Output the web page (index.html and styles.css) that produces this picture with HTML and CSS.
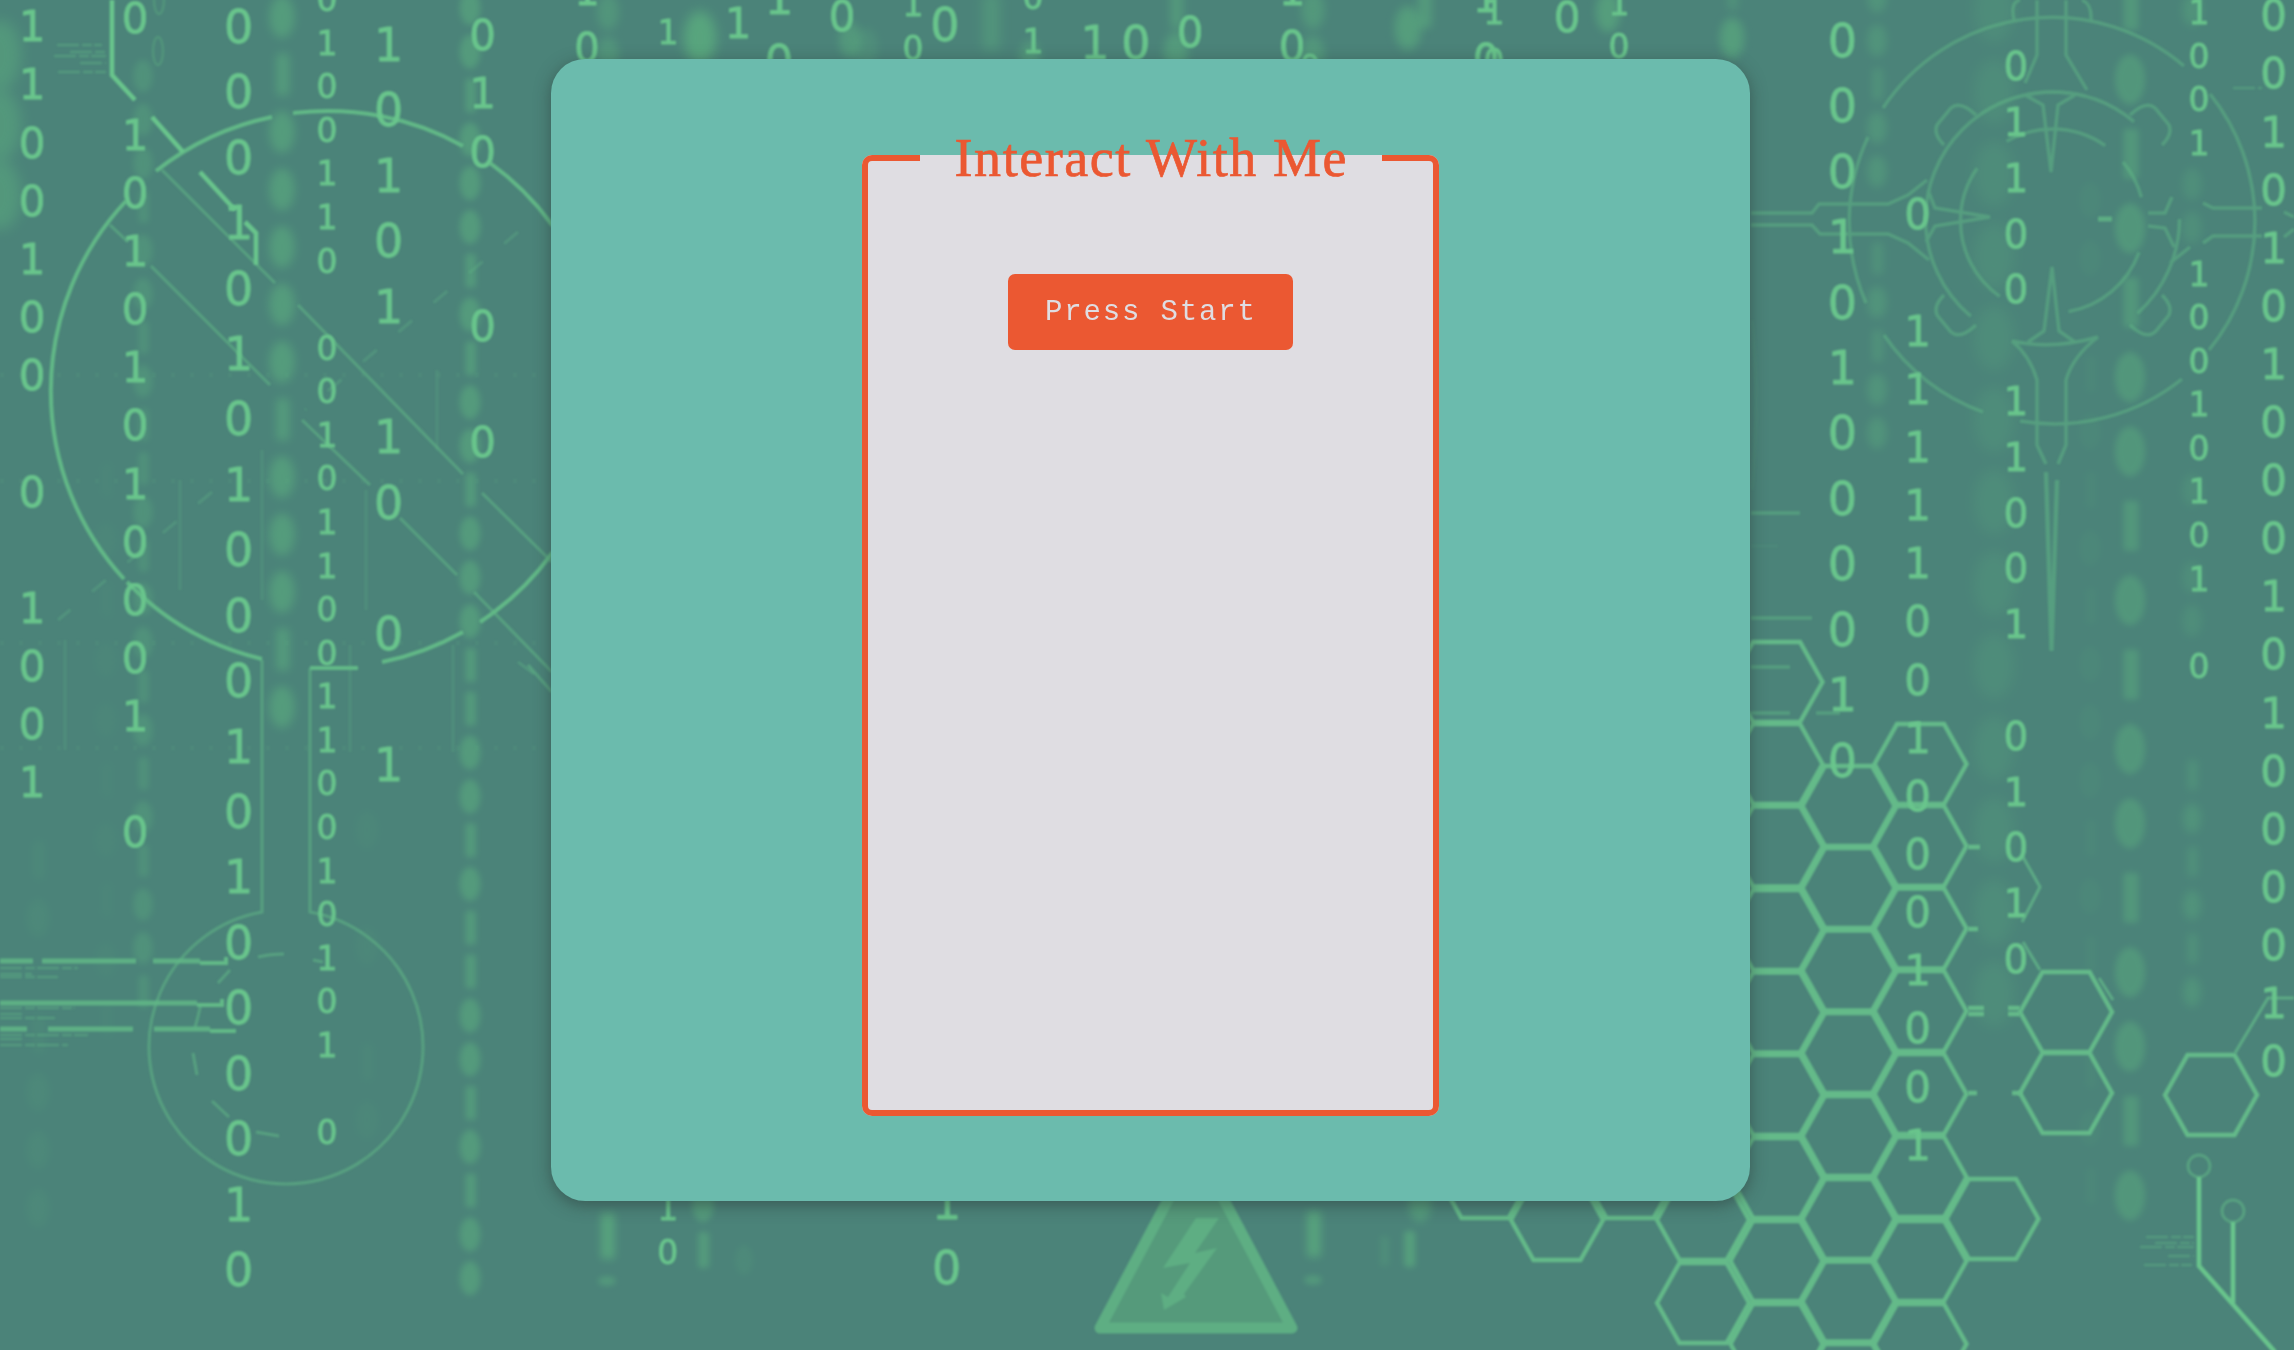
FILE: index.html
```html
<!DOCTYPE html>
<html lang="en">
<head>
<meta charset="utf-8">
<title>Interact With Me</title>
<link rel="stylesheet" href="styles.css">
</head>
<body>
<svg class="backdrop" viewBox="0 0 2294 1350" preserveAspectRatio="xMidYMid slice" aria-hidden="true">
  <g id="haze" class="haze"></g>

  <!-- magnifier outline -->
  <g class="line">
    <path class="mid" d="M262 659A278 278 0 0 1 127 582M124 579A278 278 0 0 1 126 201M156 171A278 278 0 0 1 272 117M293 113.200A278 278 0 0 1 463 146M490 163A278 278 0 0 1 553 226M553 552A278 278 0 0 1 480 622M463 632A278 278 0 0 1 382 662M358 668H310"/>
    <path class="dim" d="M262 660V912A137 137 0 1 0 310 912V668"/>
    <path class="dim" d="M162 170L275 283M298 305L463 474M482 493L552 562M110 225L128 242M151 266L270 385M302 420L370 485M400 518L457 575M474 592L552 672M528 665L552 692"/>
    <path class="dim dashed" d="M518 232L305 410M212 492L58 620"/>
    <path class="faint dots" d="M0 375H551M0 481H551M0 643H551M0 748H551"/>
    <path class="faint" d="M180 480V590M437 370V450M366 490V610M453 645V752M350 645V752M65 640V750M262 450V600"/>
    <path class="dim" d="M258 957Q270 954 284 954M313 960L323 962M218 983L230 970M201 1003Q198 1018 195 1027M193 1053L197 1075M212 1101L229 1117M256 1132L279 1136"/>
    <path class="bright" d="M112 0V75L135 100M152 117L183 152M200 172L235 210M245 222L256 233V265"/>
    <path class="dim smudge" d="M57 45H102M70 52H106M54 56H106M80 63H106M58 72H106M0 968H78M0 974H32M0 977H58M0 1008H75M0 1014H25M0 1018H55M0 1035H88M0 1039H25M0 1045H68M2146 1237H2194M2155 1243H2194M2140 1247H2194M2168 1256H2194M2144 1265H2192M2233 88H2262M518 662L534 674"/>
    <path class="rail" d="M0 961H33M42 961H136M153 961H200M0 1003H197M0 1029H27M48 1029H133M154 1029H210"/>
    <path class="mid" d="M200 963H226V957M197 1005H222V999M210 1031H236"/>
  </g>

  <!-- target reticle -->
  <g class="line dim">
    <path d="M1883 108A203 203 0 0 1 2184 66M2210 94A203 203 0 0 1 2209 350M2182 379A203 203 0 0 1 2020 421M1983 412A203 203 0 0 1 1884 335M1866 303A203 203 0 0 1 1868 137"/>
    <circle cx="2052.500" cy="219" r="127" pathLength="360" stroke-dasharray="48 82 180 50" stroke-dashoffset="0"/>
    <path d="M1982 113Q2016 92 2052 92Q2070 92 2085 96M2012 341Q2052 350 2098 337"/>
    <circle cx="2052.500" cy="221" r="92" pathLength="360" stroke-dasharray="0 20 60 45 90 25 65 15 25 15"/>
    <path d="M1751 213H1812L1819 204H1888L1908 195L1927 180M1751 225H1812L1820 234H1888L1908 243L1929 260M1928 190L1935 208L1990 217L1935 226L1926 242"/>
    <path d="M2037 0V55L2025 83M2066 0V55L2087 90M2025 95L2043 105L2051 172L2058 105L2075 95M2028 342L2044 331L2052 267L2059 331L2075 342M2012 341Q2030 356 2037 380V445L2046 464M2098 337Q2073 356 2066 380V445L2058 464"/>
    <path class="spear" d="M2046 472L2051.500 651L2057 480"/>
    <path d="M2203 203L2213 208H2262M2170 263L2190 247M2203 243L2213 236H2262M2284 212L2294 217M2284 237L2294 229M2148 213H2165L2172 197M2148 226L2165 228L2174 247"/>
    <path id="lug" d="M1976 115Q1960 100 1951 108L1937 125Q1933 134 1944 145"/>
    <use href="#lug" transform="translate(4106 0) scale(-1 1)"/>
    <use href="#lug" transform="translate(0 440) scale(1 -1)"/>
    <use href="#lug" transform="translate(4106 440) scale(-1 -1)"/>
    <path d="M2014 20Q2010 2 2020 0M2091 20Q2092 4 2082 0M1751 513H1800M1751 618H1812M1751 667H1790M1751 713H1790M1816 713H1840"/>
    <path class="faint" d="M1751 546H1778M1752 320Q1760 400 1752 490"/>
  </g>
  <path class="line glint" d="M2098 219H2112"/>

  <g id="cells" class="line cell"></g>
  <g class="line cell">
    <path class="thin" d="M2023 857L2040 887L2022 922M2023 942L2040 970"/>
    <path d="M1968 847H1980M1968 929H1978M1968 1008H1984M1968 1014H1984M2008 1008H2020M2008 1014H2020M1968 1093H1977M2012 1093H2022"/>
    <path class="thin" d="M2235 1053L2268 998H2294M2099 978L2113 1000"/>
  </g>
  <g class="line">
    <circle class="dim" cx="2199" cy="1166" r="11"/>
    <circle class="dim" cx="2233" cy="1211" r="11"/>
    <path class="bright" d="M2199 1177V1266L2275 1352M2233 1222V1303"/>
  </g>

  <!-- high voltage sign -->
  <g class="sign">
    <path class="plate" d="M1196 1147L1292 1328H1100Z"/>
    <path class="bolt" d="M1196 1218H1219L1195 1253L1217 1248L1184 1294L1186 1297L1164 1310L1161 1293L1168 1297L1190 1263L1163 1268Z"/>
  </g>

  <g id="digits" class="digits"></g>
</svg>

<main class="panel">
  <fieldset class="console">
    <legend class="console-title">Interact With Me</legend>
    <button class="start" type="button">Press Start</button>
  </fieldset>
</main>
<script src="script.js"></script>
</body>
</html>
```
FILE: styles.css
```css
* { box-sizing: border-box; }

body {
  margin: 0;
  min-height: 1350px;
  padding: 59px 543.5px 0 551.3px;
  background: #4b8379;
  overflow: hidden;
}

.backdrop {
  position: absolute;
  inset: 0;
  width: 100%;
  height: 100%;
}

.digits {
  font-family: "DejaVu Sans", sans-serif;
  text-anchor: middle;
  fill: #69c58c;
  stroke: #69c58c;
  stroke-width: 0.8;
  filter: blur(0.9px);
}

.haze { fill: #5fb780; }
.haze .ring {
  fill-opacity: 0.85;
  stroke: #5fb780;
  stroke-width: 5;
}

.line {
  fill: none;
  stroke: #62b987;
  stroke-width: 3;
  filter: blur(0.8px);
}
.line .mid { stroke-width: 4; }
.line .dim { opacity: 0.55; }
.line.dim { opacity: 0.5; stroke-width: 3.4; }
.line .bright { stroke: #69c58c; stroke-width: 4.6; }
.line.glint { stroke-width: 5; opacity: 0.8; }
.line .faint { opacity: 0.2; }
.line .rail { stroke-width: 5; opacity: 0.85; }
.line .dashed { stroke-dasharray: 18 28; opacity: 0.3; }
.line .dots { stroke-width: 5; stroke-dasharray: 4 15; opacity: 0.12; }
.line .smudge { stroke-width: 2.5; stroke-dasharray: 22 3 10 2; opacity: 0.4; }
.line .spear { stroke-width: 4.4; }

.cell { stroke-width: 4.4; stroke: #64ba89; }
.cell .thin { stroke-width: 3; opacity: 0.75; }

.sign { filter: blur(1px); }
.plate {
  fill: #559a7b;
  stroke: #5eae83;
  stroke-width: 11;
  stroke-linejoin: round;
}
.bolt { fill: #5eae83; }

.panel {
  position: relative;
  width: 1199px;
  height: 1142px;
  padding-top: 69px;
  border-radius: 34px;
  background: #6bbbad;
  box-shadow: 0 4px 16px rgba(40, 50, 50, 0.5);
}

.console {
  display: block;
  width: 577px;
  height: 988px;
  margin: 0 auto;
  padding: 86px 0 0;
  border: 6px solid #eb5832;
  border-radius: 10px;
  background: #dfdde2;
  text-align: center;
}

.console-title {
  width: 462px;
  margin: 0 auto;
  padding: 1px 0 1px 1px;
  font: 54px/58px "Liberation Serif", serif;
  letter-spacing: 1.55px;
  white-space: nowrap;
  color: #eb5832;
  -webkit-text-stroke: 0.7px #eb5832;
}

.start {
  width: 285px;
  height: 76px;
  padding: 0;
  border: 0;
  border-radius: 7px;
  background: #eb5832;
  color: #dfdde2;
  font: 29px "Liberation Mono", monospace;
  letter-spacing: 1.85px;
}
```
FILE: script.js
```js
const NS = "http://www.w3.org/2000/svg";

function shape(parent, name, attrs) {
  const el = document.createElementNS(NS, name);
  for (const k in attrs) el.setAttribute(k, attrs[k]);
  parent.appendChild(el);
  return el;
}

// Falling digits: centre x, first centre y, step, font size, characters
const columns = [
  [32, 26, 58.15, 42, "1100100 0 1001"],
  [135, 18, 58.15, 42, "0 10101010001 0"],
  [238.6, 26, 65.43, 46, "00010101000101000010"],
  [327, -1, 43.58, 33, "0100110 00101100110010101 0"],
  [388.6, 44, 65.43, 46, "10101 10 0 1"],
  [482.5, 35, 58.15, 42, "010  0 0"],
  [1842.5, 40, 65.43, 46, "000101000010"],
  [1917.5, 214, 58.15, 42, "0 111110010001001"],
  [2016, 66, 55.8, 39, "01100 11001 01010"],
  [2199, 12, 43.58, 33, "1001  10010101 0"],
  [2273.5, 15, 58.1, 42, "0010101000101000010"],
  [587, -10, 57, 40, "10"],
  [668, 32, 43, 33, "1"],
  [738, 23, 58, 42, "1"],
  [779, -2, 63, 45, "10"],
  [842, 16, 58, 42, "0"],
  [913, 4, 44, 33, "10"],
  [945, 24, 65, 46, "0"],
  [1033, -3, 43.5, 33, "01"],
  [1095, 42, 65, 46, "1"],
  [1136, 42, 65, 46, "0"],
  [1190, 32, 58, 42, "0"],
  [1292, -10, 56, 42, "10"],
  [1310, 65, 43, 32, "0"],
  [1486, -3, 62, 42, "10"],
  [1494, 12, 49, 33, "10"],
  [1567, 17, 58, 42, "0"],
  [1619, 3, 43, 33, "10"],
  [667.7, 1208, 44, 33, "10"],
  [946.7, 1202, 65, 46, "10"]
];
const digits = document.getElementById("digits");
for (const [x, y, step, size, chars] of columns) {
  [...chars].forEach((c, i) => {
    if (c === " ") return;
    shape(digits, "text", { x, y: y + i * step + size * 0.365, "font-size": size }).textContent = c;
  });
}

// Out-of-focus columns: x, first y, step, height, pattern (0 round, 1 narrow), blur, opacity
const soft = [
  [0, 55, 70, 70, "000", 7, 0.4],
  [282, 17, 57.5, 42, "0100000100010", 5, 0.48],
  [470, 8, 43.8, 34, "001000101001000110010110010100", 3, 0.45],
  [143, 76, 43.6, 32, "0001001011010010101001", 3, 0.28],
  [38, 860, 58, 38, "10 1000", 4, 0.1],
  [367, 830, 58, 38, "0 0 10", 4, 0.07],
  [106, 480, 60, 36, "1010010101", 4, 0.06],
  [1877, -3, 43.6, 32, "00100 10100", 4, 0.32],
  [2130, 5, 74.4, 50, "10101001010010010", 3, 0.38],
  [1994, 10, 82, 66, "0000000000000", 7, 0.18],
  [2192, 10, 43.6, 32, "0", 4, 0.3],
  [2192, 184, 43.6, 32, "00", 4, 0.22],
  [2192, 490, 43.6, 32, "0 00", 4, 0.2],
  [2192, 775, 43.4, 30, "101010", 4, 0.3],
  [2090, 200, 58, 36, "00 10101000101 101", 3, 0.08],
  [700, 38, 50, 54, "0", 6, 0.65],
  [608, 12, 43, 36, "00", 5, 0.35],
  [850, 40, 40, 36, "0", 4, 0.4],
  [866, 48, 40, 40, "0", 4, 0.2],
  [990, 22, 45, 56, "1", 6, 0.35],
  [1176, 8, 44, 40, "10", 5, 0.45],
  [1030, 58, 44, 34, "0", 5, 0.4],
  [1313, 10, 45, 38, "00", 5, 0.4],
  [1408, 28, 45, 44, "0", 5, 0.5],
  [1424, 5, 45, 46, "1", 4, 0.45],
  [1608, 12, 45, 40, "0", 4, 0.5],
  [1732, -6, 45, 32, "1", 4, 0.3],
  [1732, 38, 45, 40, "0", 4, 0.5],
  [607, 1236, 46, 46, "1", 4, 0.6],
  [703, 1204, 46, 36, "01", 3, 0.45],
  [744, 1260, 46, 30, "0", 3, 0.12],
  [1313, 1234, 46, 46, "1", 4, 0.6],
  [1420, 1203, 46, 38, "0", 4, 0.45],
  [1409, 1249, 46, 36, "1", 3, 0.55],
  [1384, 1251, 46, 30, "1", 3, 0.2],
  [607, 1281, 46, 8, "0", 3, 0.5],
  [1313, 1280, 46, 8, "0", 3, 0.5]
];
const haze = document.getElementById("haze");
for (const [x, y, step, height, chars, blur, opacity] of soft) {
  const g = shape(haze, "g", { opacity });
  g.style.filter = `blur(${blur}px)`;
  [...chars].forEach((c, i) => {
    if (c === " ") return;
    const cy = y + i * step;
    if (c === "0") {
      shape(g, "ellipse", { cx: x, cy, rx: Math.max(9, height * 0.3), ry: height / 2 });
    } else {
      shape(g, "rect", { x: x - height * 0.13, y: cy - height / 2, width: height * 0.3, height, rx: 3 });
    }
  });
}

// Two small zeros just behind the second column
for (const cy of [0, 51]) {
  shape(haze, "ellipse", {
    cx: cy ? 158 : 159, cy, rx: 5, ry: 14,
    style: "fill:none;stroke:#5fb780;stroke-width:2.5;opacity:.35;filter:blur(1px)"
  });
}

// Honeycomb cells by centre
const cells = {
  1485: [1178],
  1557: [1220],
  1630: [1178],
  1703: [1220, 1303],
  1776.5: [682, 764, 846.5, 930, 1012.5, 1095, 1178, 1261, 1344],
  1848.5: [806, 888, 970.5, 1053, 1136, 1219, 1301.5, 1384],
  1920.5: [764, 846, 928.5, 1011, 1094, 1177, 1261, 1344],
  1992.5: [1219],
  2066: [1012, 1093],
  2211: [1095]
};
const hive = document.getElementById("cells");
for (const x in cells) {
  for (const y of cells[x]) {
    shape(hive, "polygon", {
      points: [[-46, 0], [-23.5, -40], [23.5, -40], [46, 0], [23.5, 40], [-23.5, 40]]
        .map(([dx, dy]) => `${+x + dx},${y + dy}`).join(" ")
    });
  }
}
```
